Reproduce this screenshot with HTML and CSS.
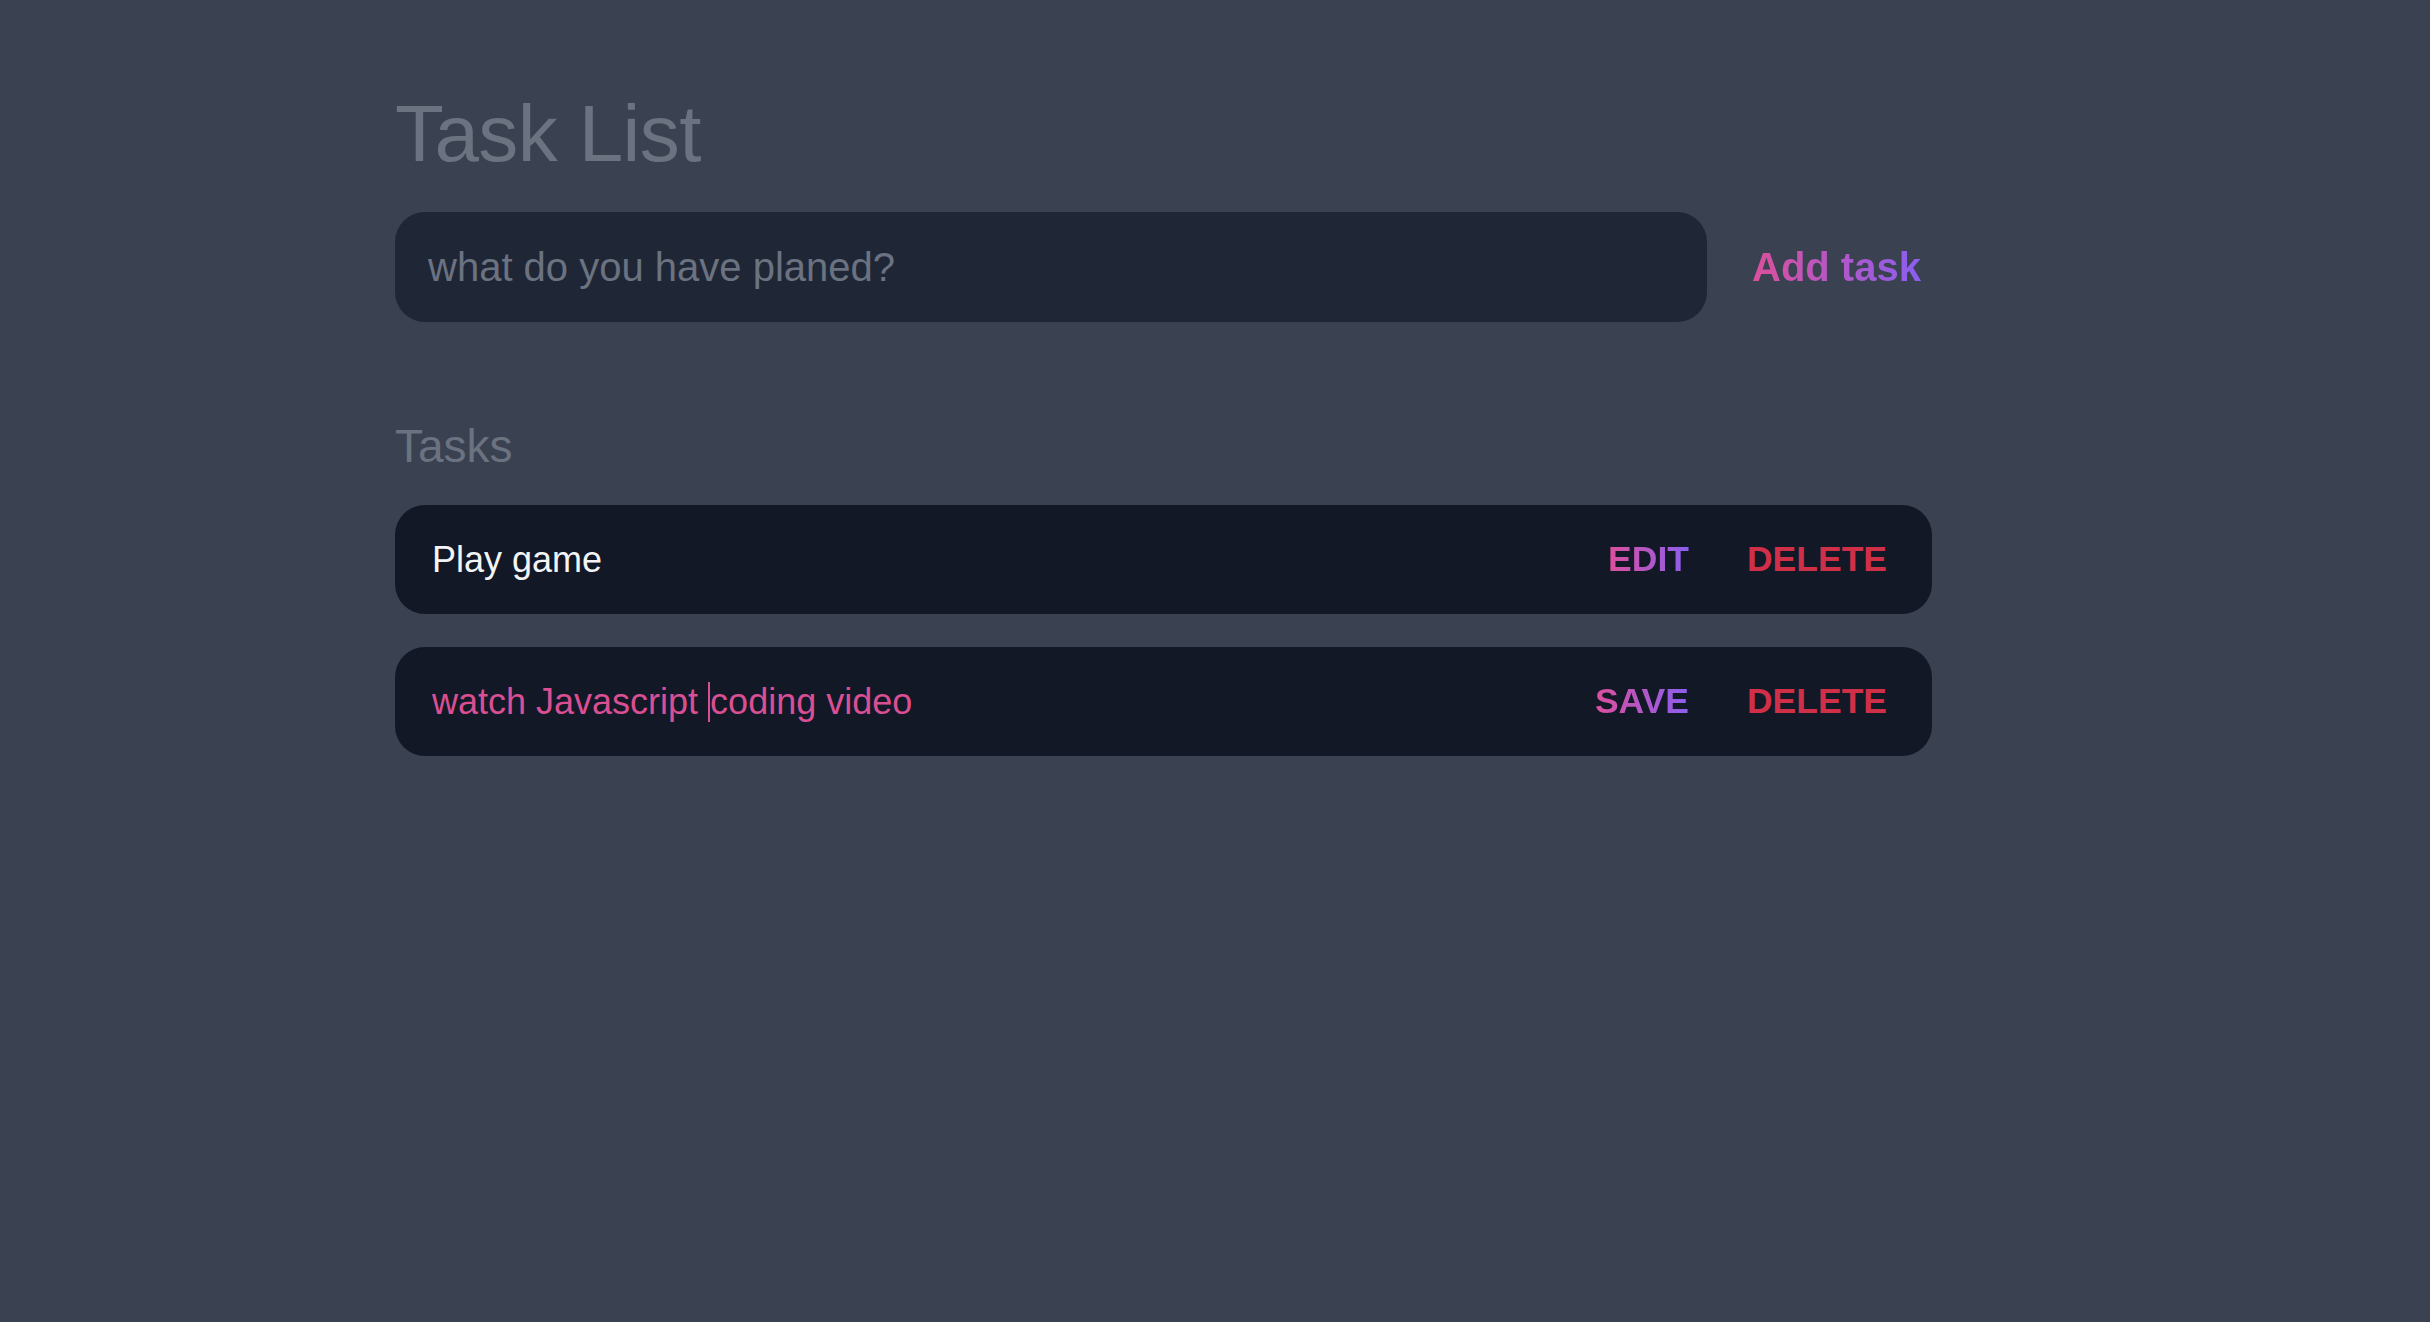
FILE: index.html
```html
<!DOCTYPE html>
<html lang="en">
<head>
<meta charset="utf-8">
<title>Task List</title>
<link rel="stylesheet" href="styles.css">
</head>
<body>
<main class="app">
  <h1 class="title">Task List</h1>
  <form class="new-task">
    <div class="new-input"><span class="placeholder">what do you have planed?</span></div>
    <button type="button" class="add-btn gradient-text">Add task</button>
  </form>
  <h2 class="tasks-heading">Tasks</h2>
  <ul class="task-list">
    <li class="task">
      <span class="task-text">Play game</span>
      <div class="actions">
        <button type="button" class="btn gradient-text">EDIT</button>
        <button type="button" class="btn btn-delete">DELETE</button>
      </div>
    </li>
    <li class="task">
      <span class="task-text editing">watch Javascript <span class="caret"></span>coding video</span>
      <div class="actions">
        <button type="button" class="btn gradient-text">SAVE</button>
        <button type="button" class="btn btn-delete">DELETE</button>
      </div>
    </li>
  </ul>
</main>
</body>
</html>
```
FILE: styles.css
```css
* { box-sizing: border-box; }
html, body { margin: 0; padding: 0; }
body {
  background: #3a4151;
  font-family: "Liberation Sans", Arial, Helvetica, sans-serif;
  min-height: 1322px;
}
.app {
  width: 1640px;
  margin: 0 auto;
  padding-top: 94px;
}
.title {
  margin: 0;
  font-size: 80px;
  line-height: 80px;
  font-weight: 400;
  color: #6b7280;
  letter-spacing: -0.6px;
}
.new-task {
  margin-top: 38px;
  display: flex;
  align-items: center;
  width: 1537px;
}
.new-input {
  width: 1312px;
  height: 110px;
  background: #1f2736;
  border-radius: 30px;
  padding-left: 33px;
  display: flex;
  align-items: center;
}
.placeholder {
  font-size: 40px;
  color: #6b7280;
}
.add-btn {
  margin-left: 45px;
  padding: 0;
  border: 0;
  background-color: transparent;
  font-family: inherit;
  font-size: 40px;
  font-weight: 700;
  cursor: pointer;
}
.gradient-text {
  background-image: linear-gradient(to right, #dc4f9c, #8a5ff0);
  -webkit-background-clip: text;
  background-clip: text;
  color: transparent;
}
.tasks-heading {
  margin: 101px 0 0;
  font-size: 46px;
  line-height: 46px;
  font-weight: 400;
  color: #6b7280;
}
.task-list {
  list-style: none;
  margin: 36px 0 0;
  padding: 0;
  width: 1537px;
  display: flex;
  flex-direction: column;
  gap: 33px;
}
.task {
  height: 109px;
  background: #121826;
  border-radius: 30px;
  display: flex;
  align-items: center;
  justify-content: space-between;
  padding: 0 45px 0 37px;
}
.task-text {
  font-size: 36px;
  color: #f3f4f6;
  display: flex;
  align-items: center;
  white-space: pre;
}
.task-text.editing { color: #d94f93; }
.caret {
  display: inline-block;
  width: 2px;
  height: 40px;
  background: #d94f93;
}
.actions {
  display: flex;
  align-items: center;
  gap: 58px;
}
.btn {
  border: 0;
  padding: 0;
  background-color: transparent;
  font-family: inherit;
  font-size: 35.5px;
  font-weight: 700;
  cursor: pointer;
}
.btn-delete { color: #cf2f47; }
```
